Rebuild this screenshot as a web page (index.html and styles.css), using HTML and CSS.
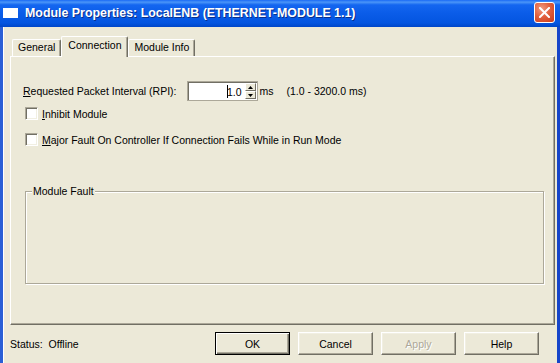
FILE: index.html
```html
<!DOCTYPE html>
<html lang="en">
<head>
  <meta charset="UTF-8" />
  <title>Module Properties: LocalENB</title>
  <link rel="stylesheet" href="styles.css">
</head>
<body>
  <div class="window">
    <div class="titlebar">
      <span class="app-icon"></span>
      <span class="title">Module Properties: LocalENB (ETHERNET-MODULE 1.1)</span>
      <button class="close" aria-label="Close">
        <svg width="11" height="11" viewBox="0 0 11 11"><path d="M1 1L10 10M10 1L1 10" stroke="#fff" stroke-width="2" stroke-linecap="square" fill="none"/></svg>
      </button>
    </div>

    <div class="frame">
      <div class="tabs">
        <div class="tab">General</div>
        <div class="tab active">Connection</div>
        <div class="tab">Module Info</div>
      </div>

      <div class="panel">
        <div class="rpi-row">
          <span class="label"><u>R</u>equested Packet Interval (RPI):</span>
          <div class="spin-edit">
            <span class="value"><span class="caret"></span>1.0</span>
            <div class="spin">
              <span class="spin-btn"><svg width="5" height="3" viewBox="0 0 5 3"><path d="M2.5 0L5 3H0z" fill="#000"/></svg></span>
              <span class="spin-btn"><svg width="5" height="3" viewBox="0 0 5 3"><path d="M0 0H5L2.5 3z" fill="#000"/></svg></span>
            </div>
          </div>
          <span class="unit">ms</span>
          <span class="range">(1.0 - 3200.0 ms)</span>
        </div>

        <label class="check first"><span class="box"></span><span><u>I</u>nhibit Module</span></label>
        <label class="check"><span class="box"></span><span><u>M</u>ajor Fault On Controller If Connection Fails While in Run Mode</span></label>

        <fieldset class="group">
          <legend>Module Fault</legend>
        </fieldset>
      </div>

      <div class="footer">
        <span class="status">Status:&nbsp; Offline</span>
        <div class="buttons">
          <button class="btn default">OK</button>
          <button class="btn">Cancel</button>
          <button class="btn" disabled>Apply</button>
          <button class="btn">Help</button>
        </div>
      </div>
    </div>
  </div>
</body>
</html>
```

FILE: styles.css
```css
html, body {
  margin: 0;
  padding: 0;
}

body {
  width: 560px;
  height: 363px;
  overflow: hidden;
  background: #ece9d8;
  font-family: "Liberation Sans", Arial, sans-serif;
  font-size: 10.5px;
  color: #000;
}

.window {
  width: 560px;
  height: 363px;
  display: flex;
  flex-direction: column;
}

/* title bar */
.titlebar {
  height: 27px;
  flex: none;
  display: flex;
  align-items: center;
  padding: 0 5px 0 3px;
  background: linear-gradient(#1a6af5 0%, #4a95f8 8%, #1466f0 18%, #0a5ce8 50%, #0455e0 85%, #0046c8 100%);
  box-sizing: border-box;
}

.app-icon {
  width: 15px;
  height: 10px;
  background: #fff;
  margin-top: -2px;
  flex: none;
}

.title {
  margin-left: 7px;
  color: #fff;
  font-weight: bold;
  font-size: 12.4px;
  text-shadow: 1px 1px 0 #0a2f8a;
  white-space: nowrap;
  margin-top: -1px;
}

.close {
  margin-left: auto;
  width: 21px;
  height: 21px;
  padding: 0;
  border: 1px solid #fff;
  border-radius: 3px;
  background: radial-gradient(circle at 35% 30%, #f09a80 0%, #e2613f 45%, #c9391a 100%);
  display: flex;
  align-items: center;
  justify-content: center;
  margin-top: -2px;
}

/* window body */
.frame {
  flex: 1;
  display: flex;
  flex-direction: column;
  border-left: 3px solid #2a5fd6;
  border-right: 3px solid #1645c9;
  box-shadow: inset 1px 0 0 #fff;
}

.tabs {
  display: flex;
  align-items: flex-end;
  height: 20px;
  margin-top: 9px;
  padding-left: 9px;
}

.tab {
  height: 17px;
  box-sizing: border-box;
  padding: 0 5px;
  line-height: 15px;
  border: 1px solid #fff;
  border-right-color: #716f64;
  border-bottom: none;
  border-radius: 2px 2px 0 0;
  box-shadow: inset -1px 0 0 #aca899;
  background: #ece9d8;
  white-space: nowrap;
}

.tab.active {
  position: relative;
  z-index: 1;
  height: 21px;
  margin-bottom: -1px;
  padding: 0 6px;
  line-height: 17px;
}

.panel {
  height: 269px;
  box-sizing: border-box;
  margin: 0 2px 0 7px;
  border-top: 1px solid #fff;
  border-left: 1px solid #fff;
  border-right: 1px solid #716f64;
  border-bottom: 1px solid #716f64;
  box-shadow: inset -1px -1px 0 #aca899;
  padding: 24px 0 0 12px;
}

.rpi-row {
  display: flex;
  align-items: center;
  height: 20px;
}

.spin-edit {
  display: flex;
  align-items: center;
  width: 71px;
  height: 20px;
  box-sizing: border-box;
  margin-left: 10px;
  background: #fff;
  border: 1px solid #aca899;
  box-shadow: inset 1px 1px 0 #716f64;
  padding: 1px 1px 1px 2px;
}

.value {
  flex: 1;
  text-align: right;
  padding-right: 3px;
}

.caret {
  display: inline-block;
  width: 1px;
  height: 13px;
  background: #000;
  vertical-align: -2px;
  margin-right: -1px;
}

.spin {
  width: 11px;
  height: 16px;
  display: flex;
  flex-direction: column;
}

.spin-btn {
  flex: 1;
  display: flex;
  align-items: center;
  justify-content: center;
  background: #ece9d8;
  border: 1px solid #fff;
  border-right-color: #716f64;
  border-bottom-color: #716f64;
}

.unit {
  margin-left: 2px;
}

.range {
  margin-left: 13px;
}

.check {
  display: flex;
  align-items: center;
  height: 13px;
  margin: 13px 0 0 2px;
}

.check.first {
  margin-top: 6px;
}

.box {
  width: 13px;
  height: 13px;
  box-sizing: border-box;
  background: #fff;
  border: 1px solid;
  border-color: #aca899 #fff #fff #aca899;
  box-shadow: inset 1px 1px 0 #716f64, inset -1px -1px 0 #f1efe2;
  margin-right: 4px;
  flex: none;
}

.group {
  margin: 39px 10px 0 2px;
  height: 99px;
  box-sizing: border-box;
  padding: 0;
  border: 1px solid #aca899;
  box-shadow: inset 1px 1px 0 #fff, 1px 1px 0 #fff;
}

.group legend {
  margin-left: 6px;
  padding: 0 1px;
  background: #ece9d8;
  line-height: 13px;
}

/* footer */
.footer {
  display: flex;
  align-items: flex-start;
  padding: 7px 18px 0 7px;
}

.status {
  margin-top: 6px;
  white-space: nowrap;
}

.buttons {
  margin-left: auto;
  display: flex;
  gap: 8px;
}

.btn {
  width: 75px;
  height: 23px;
  padding: 0;
  font-family: "Liberation Sans", Arial, sans-serif;
  font-size: 10.5px;
  color: #000;
  background: #ece9d8;
  border: 1px solid;
  border-color: #fff #716f64 #716f64 #fff;
  box-shadow: inset -1px -1px 0 #aca899, inset 1px 1px 0 #f1efe2;
}

.btn.default {
  border: 1px solid #000;
  box-shadow: inset 1px 1px 0 #fff, inset -1px -1px 0 #716f64, inset -2px -2px 0 #aca899;
}

.btn:disabled {
  color: #aca899;
  text-shadow: 1px 1px 0 #fff;
}
```
